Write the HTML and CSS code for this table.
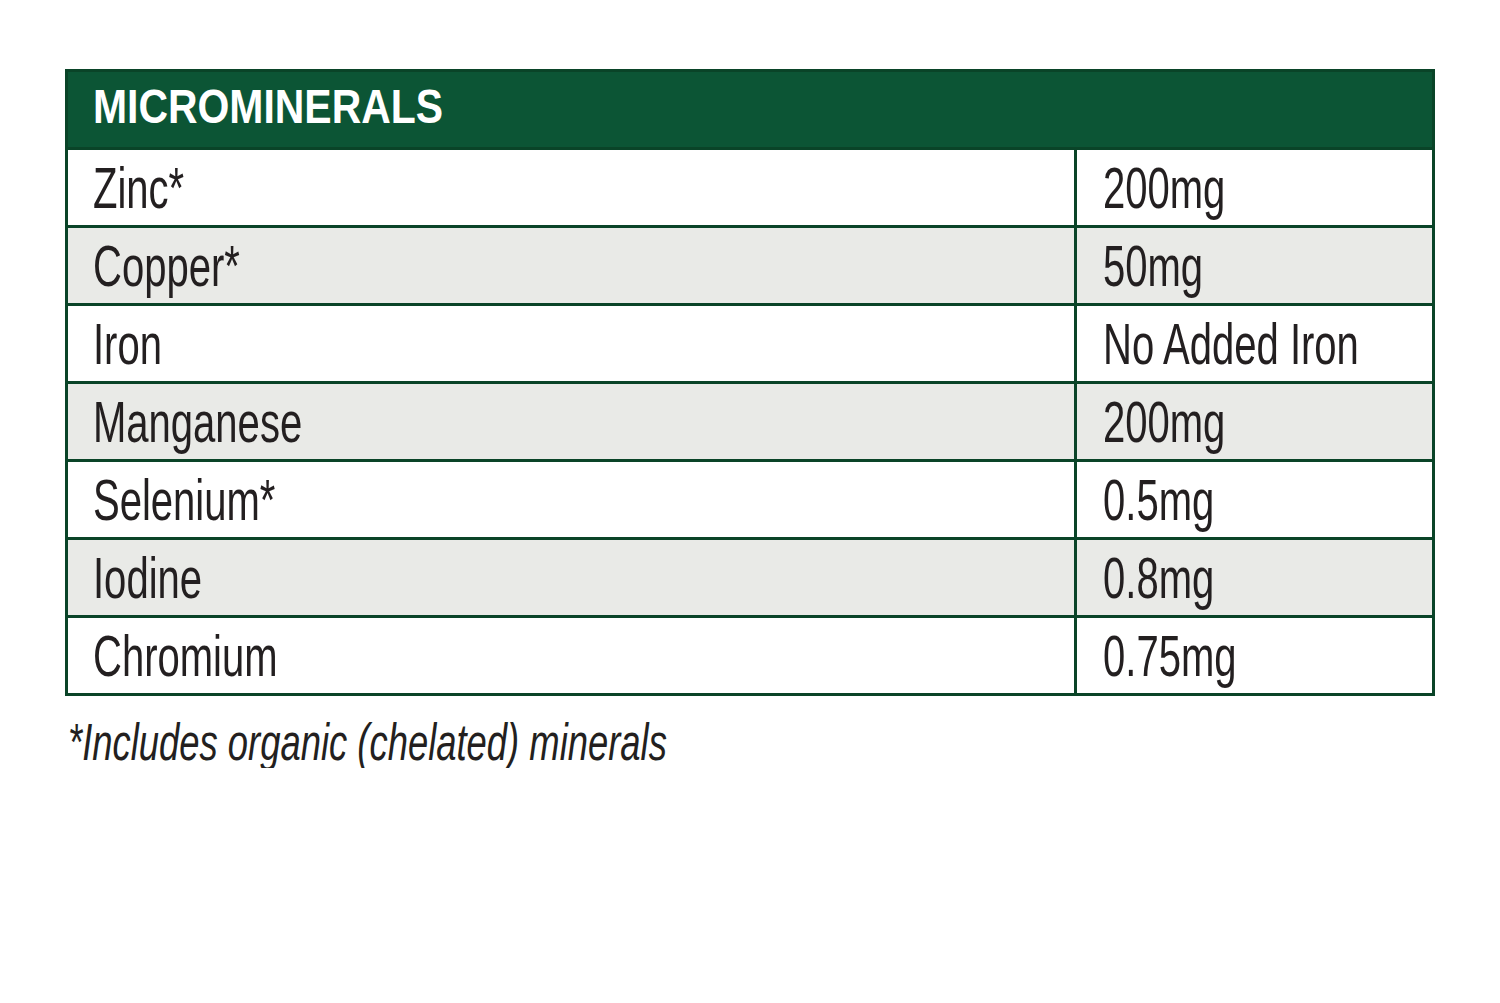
FILE: index.html
```html
<!DOCTYPE html>
<html lang="en">
<head>
<meta charset="utf-8">
<title>Microminerals</title>
<link rel="stylesheet" href="styles.css">
</head>
<body>
<main class="page">
  <section class="table">
    <header class="table-head"><span class="cond head-text">MICROMINERALS</span></header>
    <div class="row"><div class="cell name"><span class="cond">Zinc*</span></div><div class="cell value"><span class="cond">200mg</span></div></div>
    <div class="row alt"><div class="cell name"><span class="cond">Copper*</span></div><div class="cell value"><span class="cond">50mg</span></div></div>
    <div class="row"><div class="cell name"><span class="cond">Iron</span></div><div class="cell value"><span class="cond">No Added Iron</span></div></div>
    <div class="row alt"><div class="cell name"><span class="cond">Manganese</span></div><div class="cell value"><span class="cond">200mg</span></div></div>
    <div class="row"><div class="cell name"><span class="cond">Selenium*</span></div><div class="cell value"><span class="cond">0.5mg</span></div></div>
    <div class="row alt"><div class="cell name"><span class="cond">Iodine</span></div><div class="cell value"><span class="cond">0.8mg</span></div></div>
    <div class="row"><div class="cell name"><span class="cond">Chromium</span></div><div class="cell value"><span class="cond">0.75mg</span></div></div>
  </section>
  <p class="note"><span class="cond note-text">*Includes organic (chelated) minerals</span></p>
</main>
</body>
</html>
```
FILE: styles.css
```css
html, body {
  margin: 0;
  padding: 0;
  background: #ffffff;
}

.page {
  padding: 69px 0 0 65px;
  font-family: "Liberation Sans", Arial, sans-serif;
  color: #231f20;
}

.table {
  width: 1370px;
  box-sizing: border-box;
  border: 3px solid #0a4428;
}

.table-head {
  height: 75px;
  background: #0c5535;
  padding: 0 0 6px 25px;
  box-sizing: border-box;
  line-height: 69px;
  font-size: 49px;
  font-weight: 700;
  color: #ffffff;
  white-space: nowrap;
}

.cond {
  display: inline-block;
  transform-origin: left center;
  transform: scaleX(0.69);
  white-space: nowrap;
}

.head-text {
  transform: scaleX(0.835);
}

.row {
  display: grid;
  grid-template-columns: 1006px 1fr;
  border-top: 3px solid #0a4428;
  background: #ffffff;
}

.row.alt {
  background: #e9eae7;
}

.cell {
  height: 75px;
  line-height: 75px;
  font-size: 58px;
  padding-left: 25px;
  overflow: visible;
}

.cell.value {
  border-left: 3px solid #0a4428;
  padding-left: 26px;
}

.note {
  margin: 20px 0 0 3px;
  font-size: 52px;
  line-height: 52px;
  font-style: italic;
  color: #231f20;
}

.note-text {
  transform: scaleX(0.70);
}
```
